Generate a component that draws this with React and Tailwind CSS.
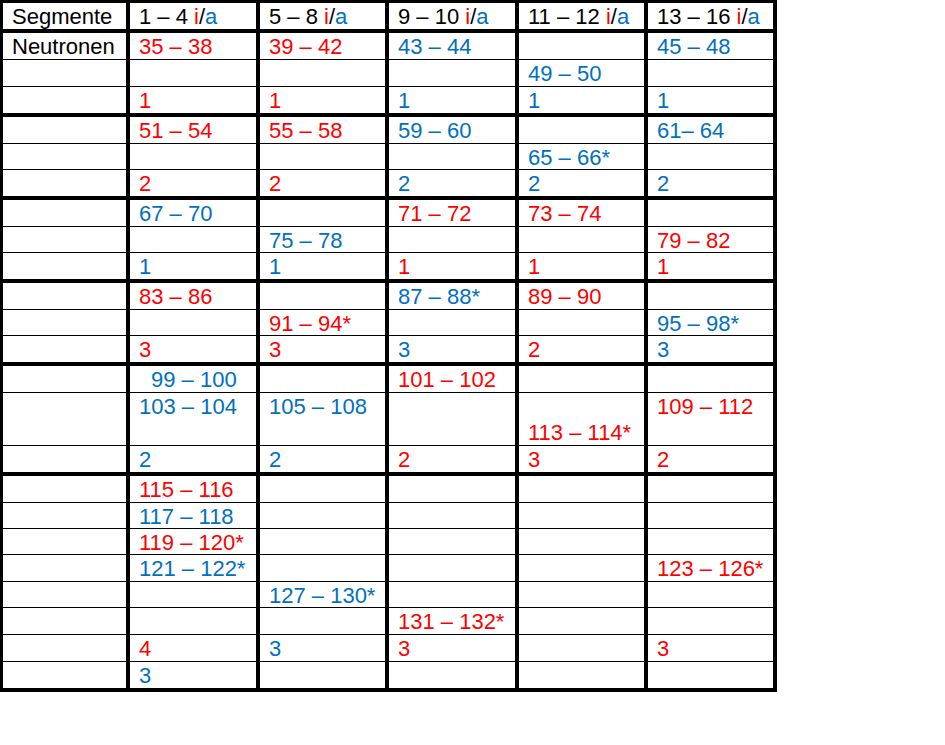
const R = 'text-[#ff0000]';
const B = 'text-[#0070c0]';

const widths = ['w-[127px]', 'w-[130px]', 'w-[129px]', 'w-[130px]', 'w-[129px]', 'w-[129px]'];

// each group: list of rows, row = { h, cells: [label, ...5 cells] }, cell = [text, color, indent, secondLine] or null
const groups = [
  [
    { h: 26, cells: [['Neutronen', ''], ['35 – 38', R], ['39 – 42', R], ['43 – 44', B], null, ['45 – 48', B]] },
    { h: 26, cells: [null, null, null, null, ['49 – 50', B], null] },
    { h: 26, cells: [null, ['1', R], ['1', R], ['1', B], ['1', B], ['1', B]] },
  ],
  [
    { h: 26, cells: [null, ['51 – 54', R], ['55 – 58', R], ['59 – 60', B], null, ['61– 64', B]] },
    { h: 25, cells: [null, null, null, null, ['65 – 66*', B], null] },
    { h: 26, cells: [null, ['2', R], ['2', R], ['2', B], ['2', B], ['2', B]] },
  ],
  [
    { h: 26, cells: [null, ['67 – 70', B], null, ['71 – 72', R], ['73 – 74', R], null] },
    { h: 25, cells: [null, null, ['75 – 78', B], null, null, ['79 – 82', R]] },
    { h: 26, cells: [null, ['1', B], ['1', B], ['1', R], ['1', R], ['1', R]] },
  ],
  [
    { h: 26, cells: [null, ['83 – 86', R], null, ['87 – 88*', B], ['89 – 90', R], null] },
    { h: 25, cells: [null, null, ['91 – 94*', R], null, null, ['95 – 98*', B]] },
    { h: 26, cells: [null, ['3', R], ['3', R], ['3', B], ['2', R], ['3', B]] },
  ],
  [
    { h: 26, cells: [null, ['99 – 100', B, true], null, ['101 – 102', R], null, null] },
    { h: 52, cells: [null, ['103 – 104', B], ['105 – 108', B], null, ['113 – 114*', R, false, true], ['109 – 112', R]] },
    { h: 26, cells: [null, ['2', B], ['2', B], ['2', R], ['3', R], ['2', R]] },
  ],
  [
    { h: 26, cells: [null, ['115 – 116', R], null, null, null, null] },
    { h: 25, cells: [null, ['117 – 118', B], null, null, null, null] },
    { h: 25, cells: [null, ['119 – 120*', R], null, null, null, null] },
    { h: 26, cells: [null, ['121 – 122*', B], null, null, null, ['123 – 126*', R]] },
    { h: 25, cells: [null, null, ['127 – 130*', B], null, null, null] },
    { h: 26, cells: [null, null, null, ['131 – 132*', R], null, null] },
    { h: 26, cells: [null, ['4', R], ['3', B], ['3', R], null, ['3', R]] },
    { h: 26, cells: [null, ['3', B], null, null, null, null] },
  ],
];

const heightClass = {
  '26-1': 'h-[27px]',
  '25-1': 'h-[26px]',
  '52-1': 'h-[53px]',
  '26-4': 'h-[30px]',
  '25-4': 'h-[29px]',
};

const Cell = ({ cell, h, last }) => {
  const hc = heightClass[`${h}-${last ? 4 : 1}`];
  const border = last ? 'border-b-4' : 'border-b';
  return (
    <td className={`${hc} ${border} border-r-4 border-black align-top p-0 pt-[3px] pl-[9px] leading-[22px] whitespace-nowrap`}>
      {cell && (
        <span className={`${cell[1]} ${cell[2] ? 'pl-[12px]' : ''} ${cell[3] ? 'block pt-[26px]' : ''}`}>
          {cell[0]}
        </span>
      )}
    </td>
  );
};

const Header = ({ children, w }) => (
  <th className={`${w} h-[30px] border-b-4 border-r-4 border-black align-top p-0 pt-[3px] pl-[9px] leading-[22px] font-normal text-left text-black whitespace-nowrap`}>
    {children}
  </th>
);

const Ia = () => (
  <>
    {' '}<span className="text-[#ff0000]">i</span>/<span className="text-[#0070c0]">a</span>
  </>
);

export default function App() {
  return (
    <div className="w-[945px] h-[745px] bg-white font-['Liberation_Sans',Arial,sans-serif] text-[22px] text-black">
      <table className="table-fixed w-[777px] border-separate border-spacing-0 border-l-[3px] border-t-[3px] border-black">
        <thead>
          <tr>
            <Header w={widths[0]}>Segmente</Header>
            <Header w={widths[1]}>1 – 4<Ia /></Header>
            <Header w={widths[2]}>5 – 8<Ia /></Header>
            <Header w={widths[3]}>9 – 10<Ia /></Header>
            <Header w={widths[4]}>11 – 12<Ia /></Header>
            <Header w={widths[5]}>13 – 16<Ia /></Header>
          </tr>
        </thead>
        <tbody>
          {groups.map((rows, gi) =>
            rows.map((row, ri) => (
              <tr key={`${gi}-${ri}`}>
                {row.cells.map((cell, ci) => (
                  <Cell key={ci} cell={cell} h={row.h} last={ri === rows.length - 1} />
                ))}
              </tr>
            ))
          )}
        </tbody>
      </table>
    </div>
  );
}
